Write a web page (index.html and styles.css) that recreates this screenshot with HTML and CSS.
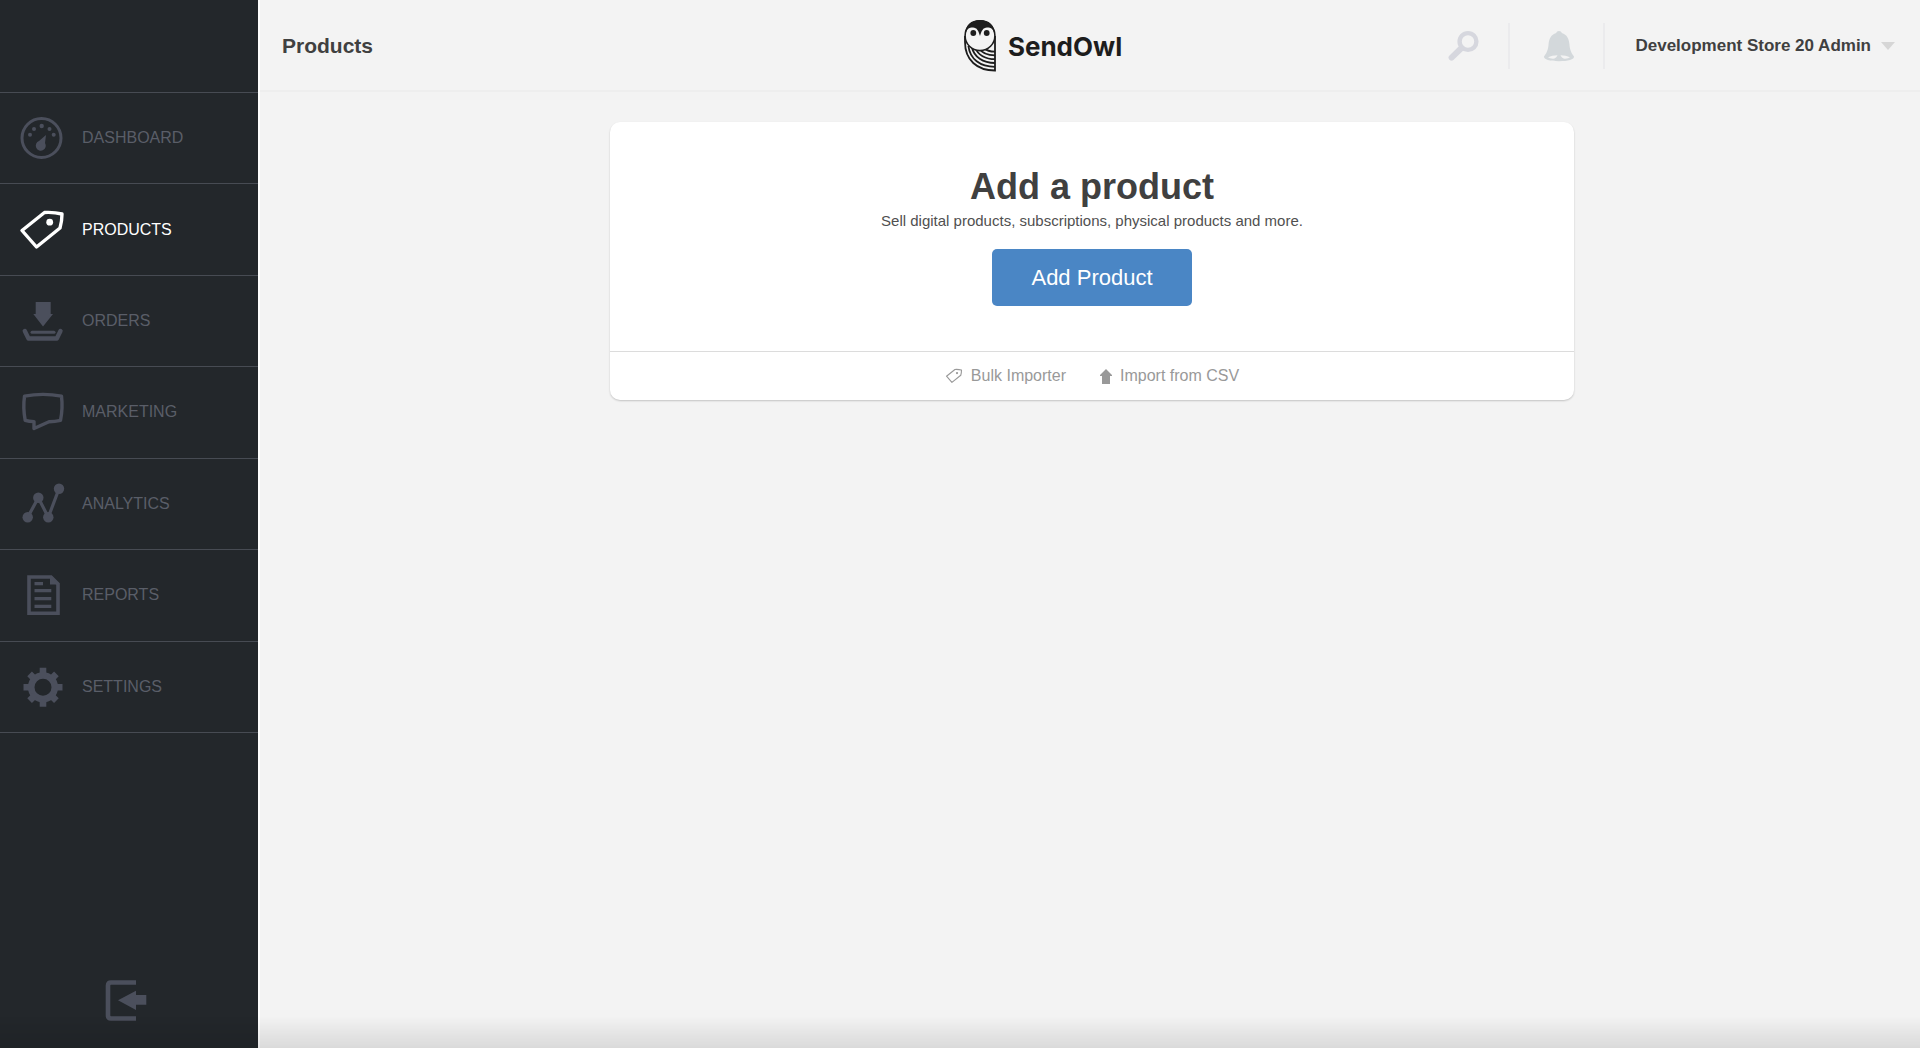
FILE: index.html
```html
<!DOCTYPE html>
<html lang="en">
<head>
    <meta charset="UTF-8">
    <meta name="viewport" content="width=device-width, initial-scale=1.0">
    <title>Products - SendOwl</title>
    <link rel="stylesheet" href="styles.css">
</head>
<body>
    <div class="app">
        <aside class="sidebar">
            <nav class="menu">
                <a class="menu-item" href="#dashboard">
                    <svg class="menu-icon" viewBox="0 0 48 48">
                        <circle cx="23.5" cy="24" r="19.5" fill="none" stroke="currentColor" stroke-width="3"/>
                        <g fill="currentColor">
                            <circle cx="12" cy="20.7" r="2"/>
                            <circle cx="16" cy="15" r="2"/>
                            <circle cx="23.7" cy="12" r="2.2"/>
                            <circle cx="31.5" cy="15" r="2"/>
                            <circle cx="35.7" cy="20.7" r="2"/>
                            <path d="M28 21l-1 8a5 5 0 1 1-6-2z"/>
                        </g>
                    </svg>
                    <span>DASHBOARD</span>
                </a>
                <a class="menu-item active" href="#products">
                    <svg class="menu-icon" viewBox="0 0 48 48">
                        <path d="M26.5 6.5Q36 6 44 8Q44 15 42 22L18.5 41L4 24.5Z" fill="none" stroke="currentColor" stroke-width="3.4" stroke-linejoin="round"/>
                        <circle cx="31.7" cy="16.2" r="3.4" fill="currentColor"/>
                    </svg>
                    <span>PRODUCTS</span>
                </a>
                <a class="menu-item" href="#orders">
                    <svg class="menu-icon" viewBox="0 0 48 48">
                        <path d="M17.7 5H32.7V17H35L25 29.5L15.3 17H17.7Z" fill="currentColor"/>
                        <path d="M6.8 34L10.5 41.5H38.8L42.5 34" fill="none" stroke="currentColor" stroke-width="4.4" stroke-linecap="round" stroke-linejoin="round"/>
                        <path d="M14 35.2H36" stroke="currentColor" stroke-width="3" stroke-linecap="round"/>
                    </svg>
                    <span>ORDERS</span>
                </a>
                <a class="menu-item" href="#marketing">
                    <svg class="menu-icon" viewBox="0 0 48 48">
                        <path d="M6.5 8.2Q25 4.5 43.5 8.2Q45 20 42.5 32.3Q37 33.5 31 33.8L16 40.5V33.6Q11 33.4 7.2 32.3Q4.8 20 6.5 8.2Z" fill="none" stroke="currentColor" stroke-width="3.4" stroke-linejoin="round"/>
                    </svg>
                    <span>MARKETING</span>
                </a>
                <a class="menu-item" href="#analytics">
                    <svg class="menu-icon" viewBox="0 0 48 48">
                        <path d="M9.7 37.3L20.3 17.7L30.3 37.3L41 8.7" fill="none" stroke="currentColor" stroke-width="3.2"/>
                        <g fill="currentColor">
                            <circle cx="9.7" cy="37.3" r="5.2"/>
                            <circle cx="20.3" cy="17.7" r="5.2"/>
                            <circle cx="30.3" cy="37.3" r="5.2"/>
                            <circle cx="41" cy="8.7" r="5.2"/>
                        </g>
                    </svg>
                    <span>ANALYTICS</span>
                </a>
                <a class="menu-item" href="#reports">
                    <svg class="menu-icon" viewBox="0 0 48 48">
                        <path d="M11 6H33L40 13V42.3H11Z" fill="none" stroke="currentColor" stroke-width="3.6"/>
                        <path d="M32 5V13.5H41Z" fill="currentColor"/>
                        <path d="M16.5 12.7H25M16.5 19.7H33.3M16.5 27.7H33.3M16.5 35.3H33.3" stroke="currentColor" stroke-width="3.2"/>
                    </svg>
                    <span>REPORTS</span>
                </a>
                <a class="menu-item" href="#settings">
                    <svg class="menu-icon" viewBox="0 0 48 48">
                        <circle cx="25" cy="24.3" r="11.8" fill="none" stroke="currentColor" stroke-width="6.6"/>
                        <g stroke="currentColor" stroke-width="6.6">
                            <path d="M25 4.8V12M25 36.6V43.8M5.5 24.3H13M37 24.3H44.5"/>
                            <path d="M11.6 10.9L17 16.3M33 32.3L38.4 37.7M38.4 10.9L33 16.3M17 32.3L11.6 37.7"/>
                        </g>
                    </svg>
                    <span>SETTINGS</span>
                </a>
            </nav>
            <a class="logout" href="#logout" aria-label="Log out">
                <svg class="menu-icon" viewBox="0 0 48 48">
                    <path d="M31 6.5H6Q3 6.5 3 9.5V39.5Q3 42.5 6 42.5H31" fill="none" stroke="currentColor" stroke-width="4.6"/>
                    <path d="M13 24.3L31 14.7V19H41.3V28.7H31V34Z" fill="currentColor"/>
                </svg>
            </a>
        </aside>

        <div class="content">
            <header class="topbar">
                <h1 class="page-title">Products</h1>
                <a class="logo" href="#home">
                    <svg class="logo-owl" viewBox="0 0 32 52">
                        <g fill="none" stroke="#1d1d1d" stroke-width="1.8">
                            <path d="M1 16V22C1 40 13 50.5 31 50.5V16"/>
                            <path d="M4.4 26C6 39 16 46.8 31 46.8"/>
                            <path d="M7.8 27C10 37 19 43 31 43"/>
                            <path d="M11.4 28C14 35 21.5 39.2 31 39.2"/>
                            <path d="M15 28C18 33 24 35.4 31 35.4"/>
                            <path d="M20 28C23 31 27 31.6 31 31.6"/>
                        </g>
                        <circle cx="16" cy="15.7" r="14.9" fill="#f3f3f3" stroke="#1d1d1d" stroke-width="1.6"/>
                        <path d="M1.5 15C1 5 7 0 16 0S31 5 30.5 15C30 9 27 7.5 23 7.5C19 7.5 17.5 11 16 16C14.5 11 13 7.5 9 7.5C5 7.5 2 9 1.5 15Z" fill="#1d1d1d"/>
                        <circle cx="9.3" cy="13" r="2.9" fill="#1d1d1d"/>
                        <circle cx="22.7" cy="13" r="2.9" fill="#1d1d1d"/>
                    </svg>
                    <span>SendOwl</span>
                </a>
                <div class="tools">
                    <button class="tool" type="button" aria-label="Search">
                        <svg class="tool-icon" viewBox="0 0 32 32">
                            <circle cx="20" cy="11.5" r="8.4" fill="none" stroke="#d6d7de" stroke-width="4.4"/>
                            <path d="M13.5 18L3.6 27.6" stroke="#d6d7de" stroke-width="6" stroke-linecap="round"/>
                        </svg>
                    </button>
                    <button class="tool" type="button" aria-label="Notifications">
                        <svg class="tool-icon" viewBox="0 0 32 32">
                            <path d="M16 1C17.4 1 18.5 1.8 18.8 3C24 4.5 26 9 26.4 14C26.8 19.5 28 22.5 31 26.5C31.5 29.5 25 31.2 16 31.2S.5 29.5 1 26.5C4 22.5 5.2 19.5 5.6 14C6 9 8 4.5 13.2 3C13.5 1.8 14.6 1 16 1Z" fill="#d3d8db"/>
                            <path d="M5 27.3Q9 25.2 14.5 25.2Q13 28.5 10 28.8Q6.5 28.5 5 27.3ZM27 27.3Q23 25.2 17.5 25.2Q19 28.5 22 28.8Q25.5 28.5 27 27.3Z" fill="#f3f3f3"/>
                        </svg>
                    </button>
                    <button class="account" type="button">
                        <span>Development Store 20 Admin</span>
                        <svg class="caret" viewBox="0 0 14 8"><path d="M0 0H14L7 8Z" fill="#d6d6d6"/></svg>
                    </button>
                </div>
            </header>

            <main class="main">
                <section class="card">
                    <div class="card-body">
                        <h2>Add a product</h2>
                        <p>Sell digital products, subscriptions, physical products and more.</p>
                        <button class="btn" type="button">Add Product</button>
                    </div>
                    <div class="card-footer">
                        <a href="#bulk">
                            <svg class="link-icon" viewBox="0 0 48 48">
                                <path d="M26.5 6.5Q36 6 44 8Q44 15 42 22L18.5 41L4 24.5Z" fill="none" stroke="currentColor" stroke-width="3" stroke-linejoin="round"/>
                                <circle cx="32" cy="16" r="3" fill="currentColor"/>
                            </svg>
                            <span>Bulk Importer</span>
                        </a>
                        <a href="#csv">
                            <svg class="arrow-icon" viewBox="0 0 12 15"><path d="M6 0L12 6V7H10V15H2V7H0V6Z" fill="currentColor"/></svg>
                            <span>Import from CSV</span>
                        </a>
                    </div>
                </section>
            </main>
        </div>
    </div>
    <div class="bottom-fade"></div>
</body>
</html>
```
FILE: styles.css
```css
* {
    box-sizing: border-box;
}
body {
    margin: 0;
    font-family: "Liberation Sans", Arial, sans-serif;
    font-size: 16px;
    color: #404040;
    background-color: #f3f3f3;
}
a {
    color: inherit;
    text-decoration: none;
}
button {
    padding: 0;
    border: none;
    background: none;
    font: inherit;
    color: inherit;
    cursor: pointer;
}
svg {
    display: block;
    flex-shrink: 0;
}
.app {
    display: flex;
    min-height: 100vh;
}

/* Sidebar */
.sidebar {
    display: flex;
    flex-direction: column;
    flex: 0 0 258px;
    padding-top: 92px;
    padding-bottom: 24px;
    background-color: #23272b;
    color: #4b4f5c;
}
.menu {
    display: grid;
    grid-auto-rows: 1fr;
    height: 641px;
    border-bottom: 1px solid #474b53;
}
.menu-item {
    display: flex;
    align-items: center;
    gap: 16px;
    padding-left: 18px;
    border-top: 1px solid #474b53;
}
.menu-item span {
    color: #5a5e68;
}
.menu-item.active,
.menu-item.active span {
    color: #fff;
}
.menu-icon {
    width: 48px;
    height: 48px;
}
.logout {
    align-self: center;
    margin-top: auto;
}

/* Top bar */
.content {
    flex: 1;
    min-width: 0;
    border-left: 2px solid #fff;
}
.topbar {
    display: grid;
    grid-template-columns: 15fr auto 17fr;
    align-items: center;
    height: 92px;
    padding-top: 2px;
    border-bottom: 2px solid #eeeeee;
}
.page-title {
    margin: 0;
    padding-left: 22px;
    font-size: 21px;
}
.logo {
    display: flex;
    align-items: center;
    gap: 12px;
    font-family: Inter, sans-serif;
    font-size: 26px;
    font-weight: 700;
    color: #1d1d1d;
}
.logo-owl {
    width: 32px;
    height: 52px;
}
.tools {
    display: flex;
    justify-content: flex-end;
    align-items: center;
    padding-right: 25px;
}
.tool {
    display: flex;
    align-items: center;
    height: 46px;
    padding: 0 28px 0 33px;
    border-right: 2px solid #ebebed;
}
.tool-icon {
    width: 32px;
    height: 32px;
}
.account {
    display: flex;
    align-items: center;
    gap: 10px;
    padding-left: 30px;
    font-size: 17px;
    font-weight: bold;
    white-space: nowrap;
}
.caret {
    width: 14px;
    height: 8px;
}

/* Card */
.main {
    padding: 30px 0 30px 4px;
}
.card {
    width: 90%;
    max-width: 964px;
    margin: 0 auto;
    background-color: #fff;
    border-radius: 10px;
    box-shadow: 0 1px 2px rgba(0, 0, 0, 0.2);
}
.card-body {
    padding: 45px 20px 45px;
    text-align: center;
}
.card-body h2 {
    margin: 0;
    font-size: 36px;
    line-height: 40px;
}
.card-body p {
    margin: 3px 0 17px;
    font-size: 15px;
    line-height: 22px;
    color: #505050;
}
.btn {
    width: 200px;
    height: 57px;
    border-radius: 5px;
    background-color: #4a86c5;
    color: #fff;
    font-size: 22px;
}
.btn:hover {
    background-color: #3f78b4;
}
.card-footer {
    display: flex;
    justify-content: center;
    gap: 34px;
    padding: 14px 20px;
    border-top: 1px solid #dcdcdc;
    line-height: 20px;
    color: #999;
}
.card-footer a {
    display: flex;
    align-items: center;
    gap: 8px;
}
.link-icon {
    width: 18px;
    height: 18px;
}
.arrow-icon {
    width: 12px;
    height: 15px;
}

/* Shade along the bottom edge of the window */
.bottom-fade {
    position: fixed;
    right: 0;
    bottom: 0;
    left: 0;
    height: 32px;
    background: linear-gradient(rgba(0, 0, 0, 0), rgba(0, 0, 0, 0.1));
    pointer-events: none;
}
```
